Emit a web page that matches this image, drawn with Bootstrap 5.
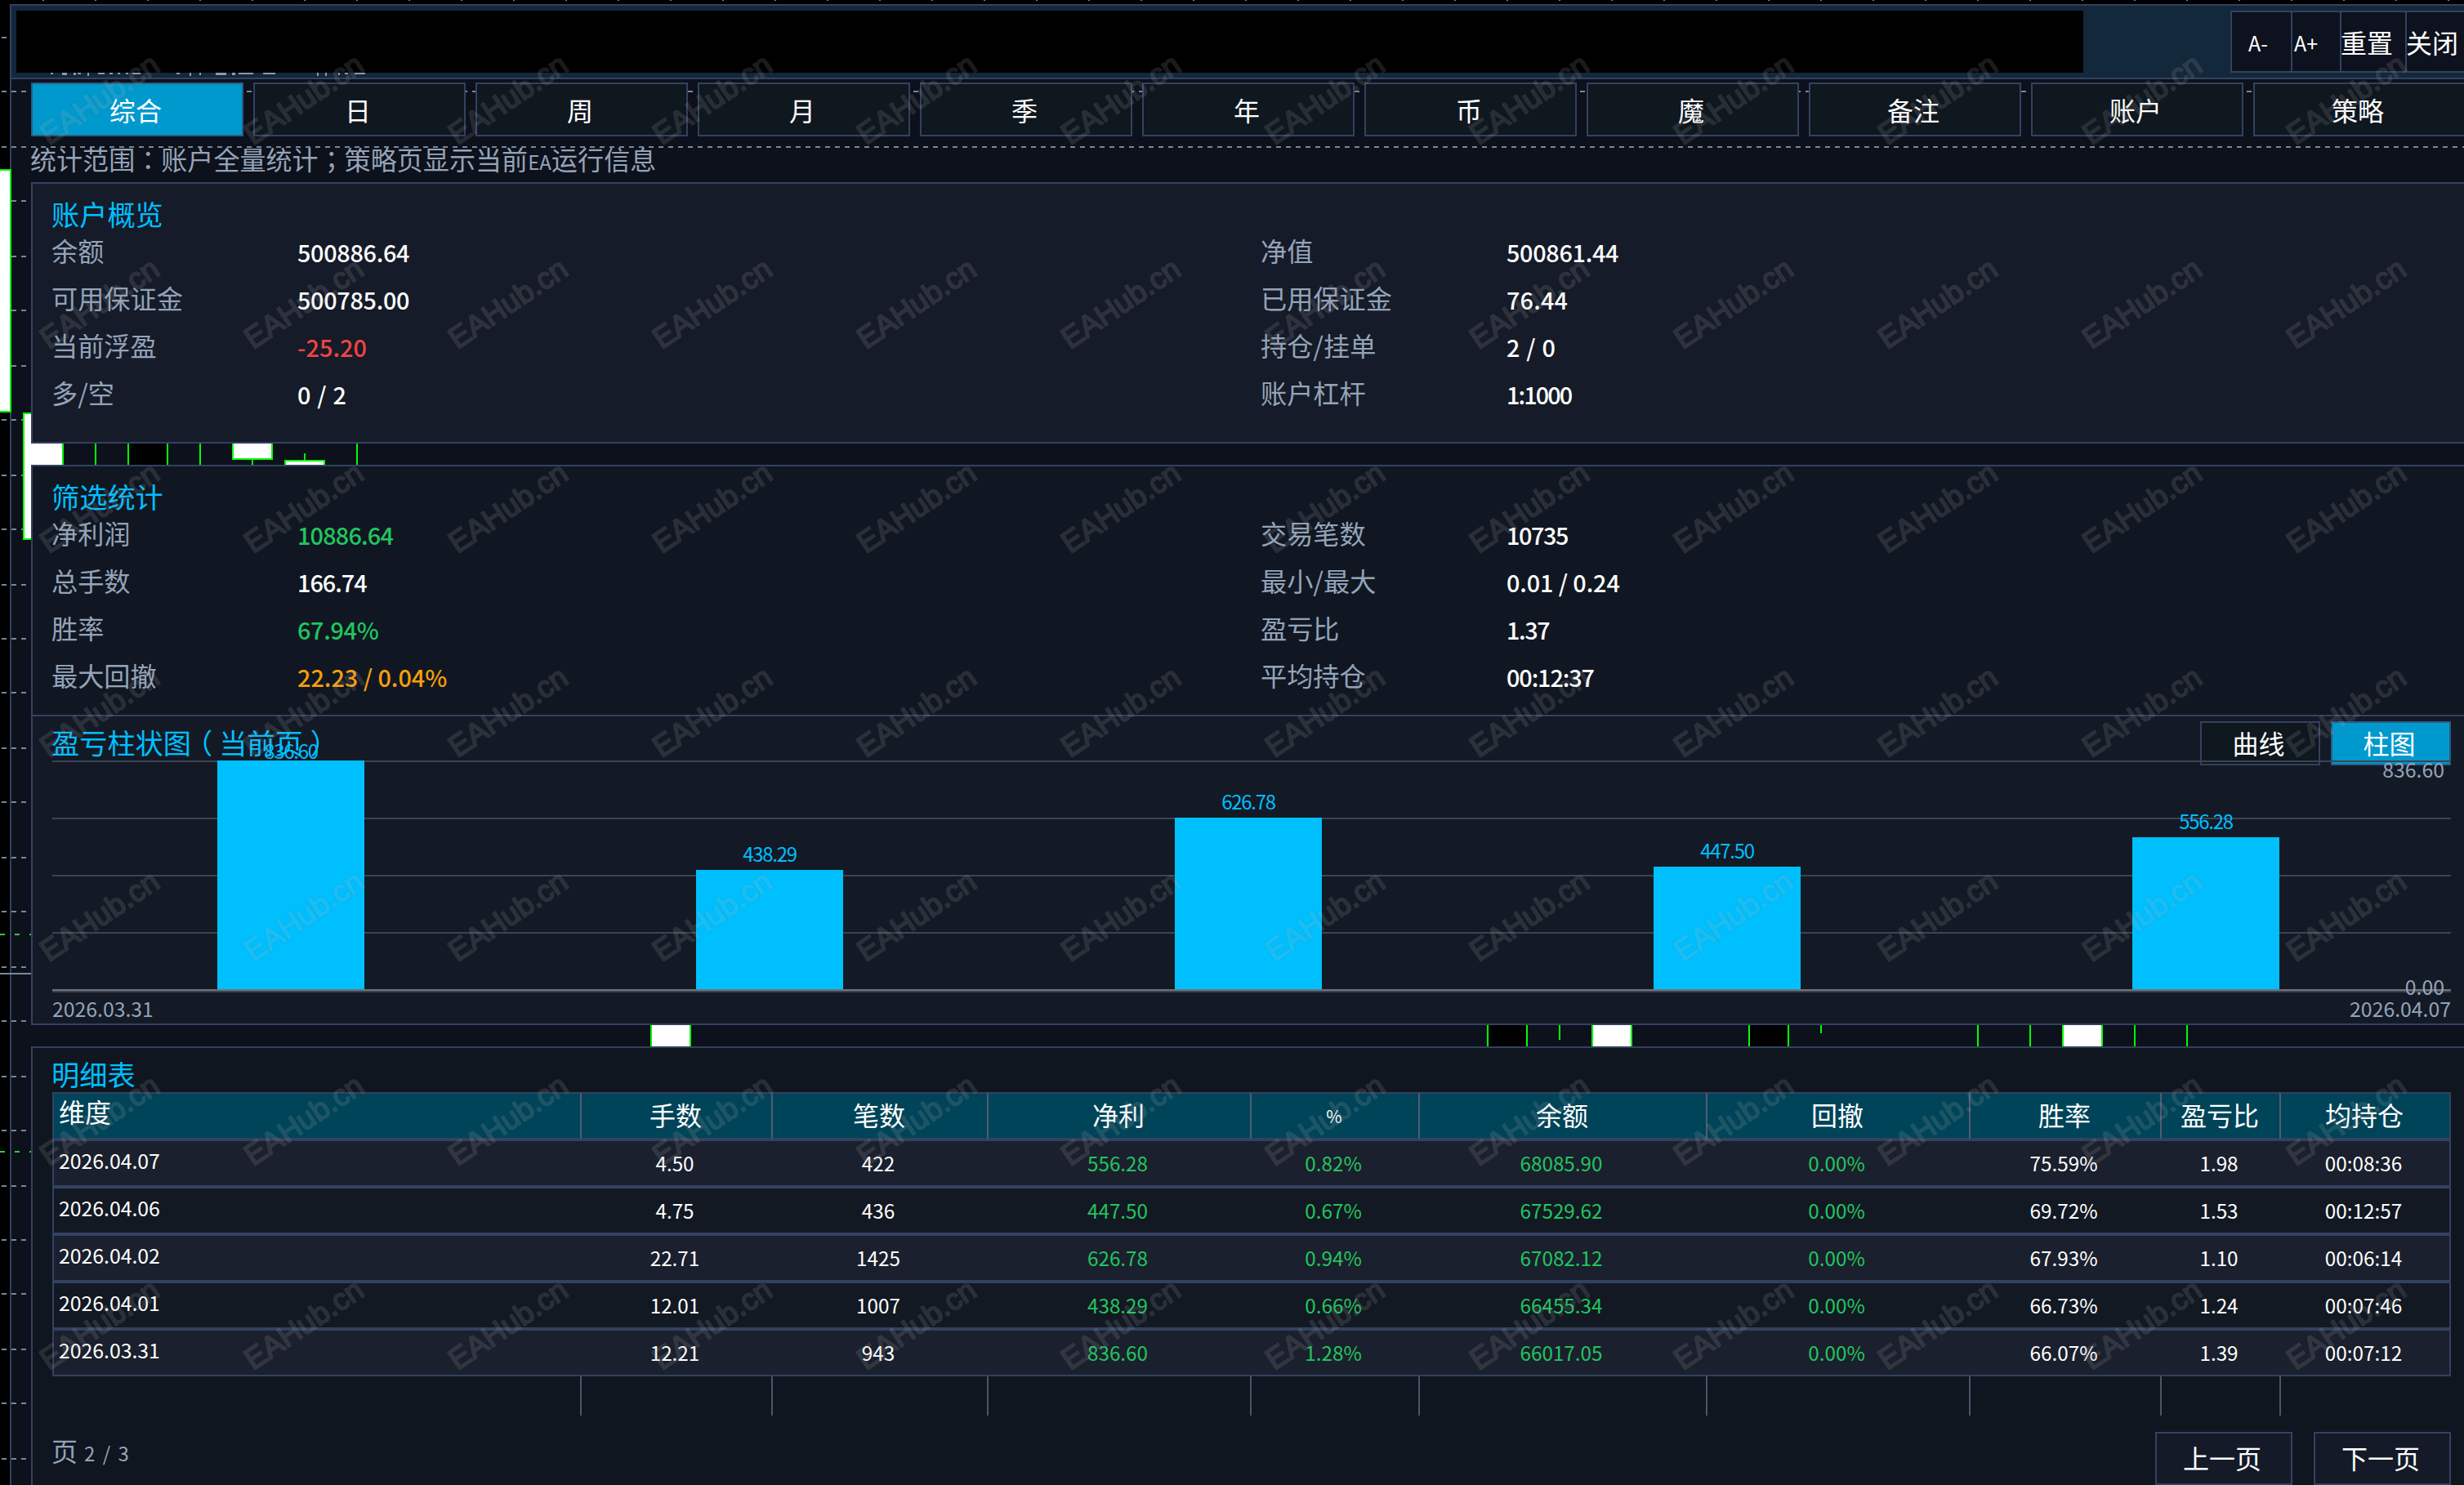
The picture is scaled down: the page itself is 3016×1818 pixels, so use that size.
<!DOCTYPE html>
<html lang="zh-CN" data-bs-theme="dark">
<head>
<meta charset="utf-8">
<meta name="viewport" content="width=device-width, initial-scale=1">
<title>EA 账户统计面板</title>
<link href="https://cdn.jsdelivr.net/npm/bootstrap@5.3.0/dist/css/bootstrap.min.css" rel="stylesheet">
<style>
:root{--line:#334160;--muted:#94a3b8;--cyan:#00bfff;--up:#22c55e;--down:#ef4444;--warn:#f59e0b}
html,body{height:1818px;overflow:hidden}
body{background:#000;color:#fff;font-family:"Noto Sans CJK SC","Noto Sans",sans-serif;font-size:32px;line-height:40px;width:3016px;position:relative}
.sheet{margin-left:12px;padding-top:5px;height:1818px;overflow:hidden}
.panel-bg{position:absolute;left:12px;top:5px;right:0;bottom:0;background:#0d111b;border-left:2px solid var(--line)}
.backdrop,.wm{position:absolute;left:0;top:0;pointer-events:none}
.wm{z-index:5}
.sheet>*{position:relative}
.small-t{font-size:24px}
.topbar{height:92px;margin-left:2px;background:#13283a;border-top:2px solid var(--line);border-bottom:2px solid var(--line);padding:6px 0 0 6px}
.titlebox{width:2530px;height:76px;background:#000}
.bits{position:absolute;left:48px;top:82px}
.tools{height:76px;margin-right:-12px;background:#0d121e;border:2px solid var(--line)}
.tools .btn{height:72px;padding:0;border:0;border-radius:0;border-right:2px solid var(--line);color:#fff;text-align:left;font-size:32px;line-height:69px;overflow:hidden}
.tabs{margin:4px 0 0 26px;gap:12px;height:66px}
.pbtn{border:2px solid var(--line);border-radius:0;background:#0f171f;color:#fff;font-size:32px;padding:0 4px 3px 0;line-height:1;flex:none;display:flex;align-items:center;justify-content:center}
.pbtn.active,.pbtn.active:hover{background:#0099ce!important;color:#fff;border-color:#2b5a86}
.tabs .pbtn{width:260px;height:66px;padding-bottom:0}
.scope{height:56px;margin-left:25px;padding-top:7px;color:var(--muted);white-space:nowrap;line-height:40px;letter-spacing:.06px}
.tc{font-family:"Noto Sans CJK TC",sans-serif}
.block{margin-left:26px;border:2px solid var(--line);border-right:0;padding:18px 16px 0 24px;background:#151b28}
.ttl{color:var(--cyan);font-size:34.2px;height:37px;line-height:37px;white-space:nowrap;margin-left:-1px}
.overview{height:320px}
.filters{height:308px;margin-top:26px;background:#101722}
.kv{display:grid;grid-template-columns:301px 1179px 301px 1fr;grid-auto-rows:58px;line-height:52px;margin-left:-1px}
.kv dt{font-weight:400;color:var(--muted);font-size:32.2px}
.kv dd{margin:0;font-size:28.8px;font-weight:500;line-height:57px;letter-spacing:-.3px}
.up{color:var(--up)!important}.down{color:var(--down)!important}.warn{color:var(--warn)!important}
.chart{height:380px;margin-top:-2px;background:#131a26;padding-top:6px}
.chead{height:48px}
.chead .pbtn{width:147px;height:54px}
.plot{position:relative;height:284px;background:repeating-linear-gradient(#3b4454 0 2px,transparent 2px 70px) 0 0/100% 280px no-repeat;border-bottom:2px solid #3b4454}
.plot::after{content:"";position:absolute;left:0;right:0;bottom:0;height:2px;background:#727378}
.bars{height:280px;width:2930px;margin-left:-1px}
.bars>div{flex:1}
.bar-v{width:180px;background:var(--cyan);flex:none}
.bar-l{color:var(--cyan);font-size:24px;letter-spacing:-1.3px;line-height:24px;height:32px;flex:none}
.bars>div:first-child .bar-l{height:24px}
.ymax,.ymin{position:absolute;right:8px;color:var(--muted);font-size:24.8px;line-height:24px;z-index:2}
.ymax{top:-2px}.ymin{bottom:-6px}
.xaxis{color:var(--muted);font-size:24.8px;line-height:38px}
.detail{margin-top:26px;height:560px;background:#0f1620;padding-top:14px}
.detail .ttl{height:40px;line-height:35px}
.grid{width:2936px;table-layout:fixed;border-collapse:separate;border-spacing:0;color:#fff;text-align:center;white-space:nowrap}
.grid th,.grid td{padding:0 2px 0 0;height:58px;border-top:2px solid var(--line);border-bottom:2px solid var(--line);font-weight:400;font-size:24.3px;vertical-align:top}
.grid th{background:#004459;font-size:32px;line-height:51px}
.grid th.small-t{font-size:21px;line-height:54px}
.grid th+th{border-left:2px solid #4f5b74}
.grid td{background:#121923;line-height:54px}
.grid tr>:first-child{text-align:left;padding-left:6px;border-left:2px solid var(--line);line-height:47px}
.grid thead tr>:first-child{line-height:43px}
.grid td:first-child{font-size:24.8px}
.grid tr>:last-child{border-right:2px solid var(--line)}
.grid tr:nth-child(odd) td{background:#1a202d}
.grid tfoot td{height:48px;border:0!important;background:transparent!important}
.grid tfoot td+td{border-left:2px solid #4a5568!important}
.pager{height:66px;margin-top:20px}
.pager .pbtn{width:168px;height:65px;background:#141a27}
</style>
</head>
<body>
<div class="panel-bg"></div>
<svg class="backdrop" width="3016" height="1818" shape-rendering="crispEdges">
  <defs>
    <pattern id="dash" x="2" y="0" width="12" height="1818" patternUnits="userSpaceOnUse"><rect width="6" height="1818" fill="#778899"/></pattern>
    <pattern id="tick" x="52" y="0" width="64" height="4" patternUnits="userSpaceOnUse"><rect width="2" height="1" fill="#778899"/></pattern>
  </defs>
  <rect width="3016" height="1" fill="url(#tick)"/>
  <g id="hgrid"></g>
  <path d="M0 1144h6m12 0h6m12 0h4M0 1410h6m12 0h6m12 0h4" stroke="#32cd32" stroke-width="2"/>
  <path d="M0 1192h38" stroke="#778899" stroke-width="2"/>
  <rect x="-10" y="208" width="23" height="296" fill="#fff" stroke="#0f0" stroke-width="2"/>
  <rect x="29" y="506" width="48" height="154" fill="#fff" stroke="#0f0" stroke-width="2"/>
  <g fill="#0f0">
    <rect x="116" y="540" width="2" height="30"/><rect x="156" y="540" width="50" height="30"/><rect x="244" y="540" width="2" height="30"/>
    <rect x="308" y="540" width="2" height="30"/><rect x="372" y="555" width="2" height="15"/><rect x="436" y="540" width="2" height="30"/>
    <rect x="284" y="540" width="50" height="23"/><rect x="348" y="563" width="50" height="8"/>
    <rect x="796" y="1250" width="50" height="34"/><rect x="1820" y="1250" width="50" height="34"/><rect x="1948" y="1250" width="50" height="34"/>
    <rect x="2140" y="1250" width="50" height="34"/><rect x="2524" y="1250" width="50" height="34"/>
    <rect x="1908" y="1250" width="2" height="23"/><rect x="2228" y="1250" width="2" height="15"/>
    <rect x="2420" y="1250" width="2" height="34"/><rect x="2484" y="1250" width="2" height="34"/><rect x="2612" y="1250" width="2" height="34"/><rect x="2676" y="1250" width="2" height="34"/>
  </g>
  <g fill="#fff"><rect x="286" y="540" width="46" height="21"/><rect x="350" y="565" width="46" height="6"/><rect x="798" y="1250" width="46" height="34"/><rect x="1950" y="1250" width="46" height="34"/><rect x="2526" y="1250" width="46" height="34"/></g>
  <g fill="#000"><rect x="158" y="540" width="46" height="30"/><rect x="1822" y="1250" width="46" height="34"/><rect x="2142" y="1250" width="46" height="34"/></g>
</svg>

<main class="sheet">
  <header class="topbar d-flex justify-content-between">
    <div class="titlebox"></div>
    <svg class="bits" width="400" height="4" fill="#8a9bad"><path d="M0 0h3v2h-3zM14 0h6v3h-6zM28 0h3v3h-3zM33 0h4v2h-4zM45 0h2v4h-2zM58 0h8v2h-8zM72 0h4v2h-4zM82 0h3v2h-3zM92 0h3v2h-3zM100 0h10v2h-10zM154 0h4v2h-4zM170 0h2v4h-2zM182 0h2v3h-2zM202 0h13v3h-13zM222 0h4v3h-4zM230 0h18v2h-18zM260 0h15v2h-15zM326 0h2v4h-2zM336 0h2v4h-2zM352 0h2v3h-2zM360 0h4v2h-4zM372 0h13v2h-13z"/></svg>
    <div class="tools d-flex">
      <button class="btn" style="width:74px;padding-left:20px;font-size:25px;line-height:75px">A-</button>
      <button class="btn" style="width:60px;padding-left:2px;font-size:25px;line-height:75px">A+</button>
      <button class="btn" style="width:80px;text-indent:-1px">重置</button>
      <button class="btn" style="width:80px;text-indent:-1px">关闭</button>
    </div>
  </header>

  <nav class="tabs d-flex">
    <button class="btn pbtn active">综合</button><button class="btn pbtn">日</button><button class="btn pbtn">周</button><button class="btn pbtn">月</button><button class="btn pbtn">季</button><button class="btn pbtn">年</button><button class="btn pbtn">币</button><button class="btn pbtn">魔</button><button class="btn pbtn">备注</button><button class="btn pbtn">账户</button><button class="btn pbtn">策略</button>
  </nav>
  <div class="scope">统计范围<span class="tc" lang="zh-TW">：</span>账户全量统计<span class="tc" lang="zh-TW">；</span>策略页显示当前<span class="small-t">EA</span>运行信息</div>

  <section class="block overview">
    <div class="ttl">账户概览</div>
    <dl class="kv mb-0">
      <dt>余额</dt><dd>500886.64</dd><dt>净值</dt><dd>500861.44</dd>
      <dt>可用保证金</dt><dd>500785.00</dd><dt>已用保证金</dt><dd style="letter-spacing:.2px">76.44</dd>
      <dt>当前浮盈</dt><dd class="down" style="letter-spacing:.1px">-25.20</dd><dt>持仓/挂单</dt><dd style="word-spacing:2px">2 / 0</dd>
      <dt>多/空</dt><dd style="word-spacing:2px">0 / 2</dd><dt>账户杠杆</dt><dd style="letter-spacing:-1.9px">1:1000</dd>
    </dl>
  </section>

  <section class="block filters">
    <div class="ttl">筛选统计</div>
    <dl class="kv mb-0">
      <dt>净利润</dt><dd class="up" style="letter-spacing:-.8px">10886.64</dd><dt>交易笔数</dt><dd style="letter-spacing:-1.4px">10735</dd>
      <dt>总手数</dt><dd style="letter-spacing:-1px">166.74</dd><dt>最小/最大</dt><dd style="letter-spacing:-.1px">0.01 / 0.24</dd>
      <dt>胜率</dt><dd class="up">67.94%</dd><dt>盈亏比</dt><dd style="letter-spacing:-1.4px">1.37</dd>
      <dt>最大回撤</dt><dd class="warn" style="letter-spacing:0">22.23 / 0.04%</dd><dt>平均持仓</dt><dd style="letter-spacing:-1.1px">00:12:37</dd>
    </dl>
  </section>

  <section class="block chart">
    <div class="chead d-flex">
      <div class="ttl me-auto" style="line-height:50px">盈亏柱状图<span style="margin:0 8px 0 -8px">（</span>当前页<span style="margin-left:9px">）</span></div>
      <button class="btn pbtn" style="margin-right:13px">曲线</button>
      <button class="btn pbtn active">柱图</button>
    </div>
    <div class="plot">
      <div class="bars d-flex align-items-end" id="bars"></div>
      <span class="ymax">836.60</span><span class="ymin">0.00</span>
    </div>
    <div class="xaxis d-flex justify-content-between"><span>2026.03.31</span><span>2026.04.07</span></div>
  </section>

  <section class="block detail">
    <div class="ttl">明细表</div>
    <table class="grid">
      <colgroup><col style="width:646px"><col style="width:234px"><col style="width:264px"><col style="width:322px"><col style="width:206px"><col style="width:352px"><col style="width:322px"><col style="width:234px"><col style="width:146px"><col style="width:210px"></colgroup>
      <thead><tr><th>维度</th><th>手数</th><th>笔数</th><th>净利</th><th class="small-t">%</th><th>余额</th><th>回撤</th><th>胜率</th><th>盈亏比</th><th>均持仓</th></tr></thead>
      <tbody>
        <tr><td>2026.04.07</td><td>4.50</td><td>422</td><td class="up">556.28</td><td class="up">0.82%</td><td class="up">68085.90</td><td class="up">0.00%</td><td>75.59%</td><td>1.98</td><td>00:08:36</td></tr>
        <tr><td>2026.04.06</td><td>4.75</td><td>436</td><td class="up">447.50</td><td class="up">0.67%</td><td class="up">67529.62</td><td class="up">0.00%</td><td>69.72%</td><td>1.53</td><td>00:12:57</td></tr>
        <tr><td>2026.04.02</td><td>22.71</td><td>1425</td><td class="up">626.78</td><td class="up">0.94%</td><td class="up">67082.12</td><td class="up">0.00%</td><td>67.93%</td><td>1.10</td><td>00:06:14</td></tr>
        <tr><td>2026.04.01</td><td>12.01</td><td>1007</td><td class="up">438.29</td><td class="up">0.66%</td><td class="up">66455.34</td><td class="up">0.00%</td><td>66.73%</td><td>1.24</td><td>00:07:46</td></tr>
        <tr><td>2026.03.31</td><td>12.21</td><td>943</td><td class="up">836.60</td><td class="up">1.28%</td><td class="up">66017.05</td><td class="up">0.00%</td><td>66.07%</td><td>1.39</td><td>00:07:12</td></tr>
      </tbody>
      <tfoot><tr><td></td><td></td><td></td><td></td><td></td><td></td><td></td><td></td><td></td><td></td></tr></tfoot>
    </table>
    <div class="pager d-flex">
      <div class="me-auto" style="color:var(--muted);line-height:45px;margin-left:-1px">页<span class="small-t" style="margin-left:8px;word-spacing:4px">2 / 3</span></div>
      <button class="btn pbtn" style="margin-right:26px">上一页</button>
      <button class="btn pbtn">下一页</button>
    </div>
  </section>
</main>

<svg class="wm" width="3016" height="1818">
  <defs>
    <pattern id="mark" x="0" y="0" width="250" height="250" patternUnits="userSpaceOnUse">
      <g transform="translate(62 178) rotate(-34)" font-family="Liberation Sans, sans-serif" font-size="37" stroke-linejoin="round">
        <text x="-2" y="-1" fill="none" stroke="#000" stroke-width="4" opacity=".05">EAHub.cn</text>
        <text x="-2" y="-1" fill="#fff" stroke="#fff" stroke-width="2" opacity=".105">EAHub.cn</text>
      </g>
    </pattern>
  </defs>
  <rect width="3016" height="1750" fill="url(#mark)"/>
</svg>

<script src="https://cdn.jsdelivr.net/npm/bootstrap@5.3.0/dist/js/bootstrap.bundle.min.js"></script>
<script>
const days=[836.60,438.29,626.78,447.50,556.28],peak=Math.max(...days);
document.getElementById('bars').innerHTML=days.map(v=>
  `<div class="d-flex flex-column align-items-center justify-content-end"><span class="bar-l">${v.toFixed(2)}</span><div class="bar-v" style="height:${Math.round(v/peak*140)*2}px"></div></div>`).join('');
document.getElementById('hgrid').innerHTML=[46,112,180,246,314,380,448,514,582,648,716,782,848,916,982,1050,1116,1184,1250,1318,1384,1452,1518,1584,1652,1718,1786].map(y=>
  `<rect y="${y-1}" width="3016" height="2" fill="url(#dash)"/>`).join('');
</script>
</body>
</html>
